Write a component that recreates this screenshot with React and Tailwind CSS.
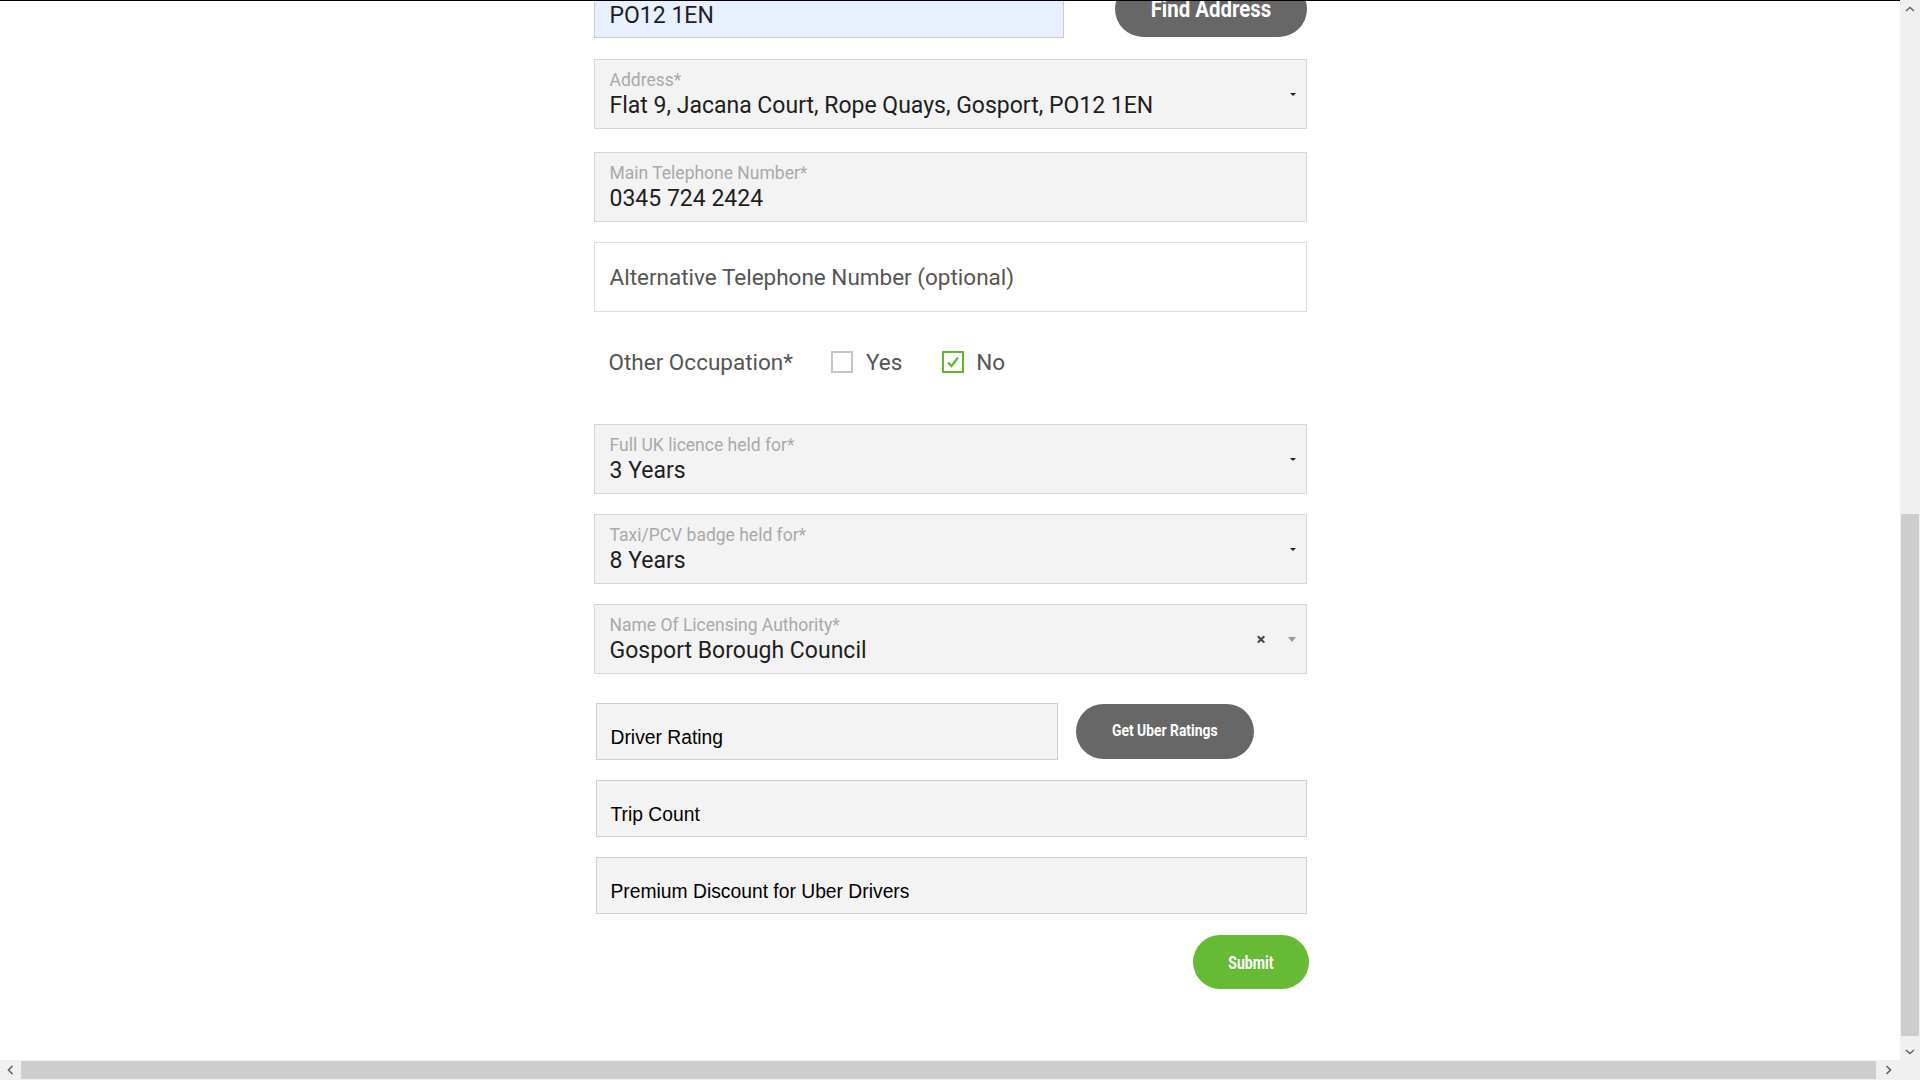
import React from "react";

function Caret({ gray }) {
  if (gray) {
    return (
      <span className="w-0 h-0 border-l-[4px] border-r-[4px] border-t-[5px] border-l-transparent border-r-transparent border-t-[#9a9a9a]" />
    );
  }
  return (
    <span className="w-0 h-0 border-l-[3px] border-r-[3px] border-t-[3px] border-l-transparent border-r-transparent border-t-[#222]" />
  );
}

function SelectField({ label, value, clear, grayCaret, className = "" }) {
  return (
    <div className={"relative h-[70px] border border-[#d6d6d6] bg-[#f3f3f3] pl-[15px] pt-[10px] " + className}>
      <div className="text-[17.5px] leading-[20px] text-[#a9a9a9]">{label}</div>
      <div className="mt-[2px] text-[23px] leading-[27px] text-[#1e1e1e]">{value}</div>
      <div className="absolute right-[10px] top-0 bottom-0 flex items-center gap-[22px]">
        {clear && <span className="text-[17px] font-bold text-[#444] leading-none">×</span>}
        <Caret gray={grayCaret} />
      </div>
    </div>
  );
}

function Check({ checked }) {
  return (
    <span
      className={
        "w-[22px] h-[22px] flex items-center justify-center bg-white border-2 " +
        (checked ? "border-[#5cb82e]" : "border-[#c4c4c4]")
      }
    >
      {checked && (
        <svg width="16" height="16" viewBox="0 0 16 16">
          <path d="M3 8.5 L6.5 12 L13 3.5" fill="none" stroke="#5cb82e" strokeWidth="2.2" />
        </svg>
      )}
    </span>
  );
}

function PlainBox({ text, className = "" }) {
  return (
    <div
      className={
        "h-[57px] border border-[#cfcfcf] bg-[#f3f3f3] pl-[14px] pb-[10px] flex items-end font-['Liberation_Sans',Arial,sans-serif] text-[19.3px] leading-[22px] text-black " +
        className
      }
    >
      {text}
    </div>
  );
}

function BtnText({ children, size }) {
  return (
    <span
      className={
        "inline-block whitespace-nowrap font-['Roboto',sans-serif] font-bold text-white " + size
      }
    >
      {children}
    </span>
  );
}

export default function App() {
  return (
    <div className="w-[1920px] h-[1080px] overflow-hidden flex flex-col bg-white font-['Roboto',sans-serif]">
      <div className="flex-1 flex min-h-0">
        <div className="flex-1 border-t border-black overflow-hidden">
          <div className="w-[713px] mx-auto mt-[-20px] flex flex-col">
            {/* postcode row */}
            <div className="flex items-start">
              <div className="mt-[1px] w-[470px] h-[56px] bg-[#e8f0fe] border border-[#c9ccd3] pl-[15px] pb-[8px] flex items-end text-[23px] leading-[27px] text-[#1e1e1e]">
                PO12 1EN
              </div>
              <div className="ml-auto w-[192px] h-[56px] rounded-full bg-[#676767] flex items-center justify-center">
                <BtnText size="text-[24px] scale-x-[0.85]">Find Address</BtnText>
              </div>
            </div>

            <SelectField
              className="mt-[21px]"
              label="Address*"
              value="Flat 9, Jacana Court, Rope Quays, Gosport, PO12 1EN"
            />

            <div className="mt-[23px] h-[70px] border border-[#d6d6d6] bg-[#f3f3f3] pl-[15px] pt-[10px]">
              <div className="text-[17.5px] leading-[20px] text-[#a9a9a9]">Main Telephone Number*</div>
              <div className="mt-[2px] text-[23px] leading-[27px] text-[#1e1e1e]">0345 724 2424</div>
            </div>

            <div className="mt-[20px] h-[70px] border border-[#dcdcdc] bg-white pl-[15px] flex items-center text-[22.5px] leading-[26px] text-[#555]">
              Alternative Telephone Number (optional)
            </div>

            <div className="mt-[36px] h-[28px] flex items-center pl-[15px] text-[22.5px] leading-[26px] text-[#555]">
              <span>Other Occupation*</span>
              <span className="ml-[38px]"><Check /></span>
              <span className="ml-[13px]">Yes</span>
              <span className="ml-[40px]"><Check checked /></span>
              <span className="ml-[12px]">No</span>
            </div>

            <SelectField className="mt-[48px]" label="Full UK licence held for*" value="3 Years" />
            <SelectField className="mt-[20px]" label="Taxi/PCV badge held for*" value="8 Years" />
            <SelectField
              className="mt-[20px]"
              label="Name Of Licensing Authority*"
              value="Gosport Borough Council"
              clear
              grayCaret
            />

            <div className="mt-[29px] flex items-center">
              <PlainBox className="ml-[2px] w-[462px]" text="Driver Rating" />
              <div className="ml-[18px] w-[178px] h-[55px] rounded-full bg-[#676767] flex items-center justify-center">
                <BtnText size="text-[16.5px] scale-x-[0.84]">Get Uber Ratings</BtnText>
              </div>
            </div>

            <PlainBox className="mt-[20px] ml-[2px]" text="Trip Count" />
            <PlainBox className="mt-[20px] ml-[2px]" text="Premium Discount for Uber Drivers" />

            <div className="mt-[21px] flex justify-end mr-[-2px]">
              <div className="w-[116px] h-[54px] rounded-full bg-[#67bb34] flex items-center justify-center">
                <BtnText size="text-[18px] scale-x-[0.78]">Submit</BtnText>
              </div>
            </div>
          </div>
        </div>

        {/* vertical scrollbar */}
        <div className="w-[20px] bg-[#f0f0f0] flex flex-col">
          <div className="h-[17px] flex items-center justify-center">
            <svg width="10" height="6" viewBox="0 0 10 6">
              <path d="M1 5 L5 1.5 L9 5" fill="none" stroke="#606060" strokeWidth="1.4" />
            </svg>
          </div>
          <div className="flex-1 flex flex-col px-[1px]">
            <div className="h-[497px]" />
            <div className="h-[522px] bg-[#cdcdcd]" />
          </div>
          <div className="h-[17px] flex items-center justify-center">
            <svg width="10" height="6" viewBox="0 0 10 6">
              <path d="M1 1 L5 4.5 L9 1" fill="none" stroke="#606060" strokeWidth="1.4" />
            </svg>
          </div>
        </div>
      </div>

      {/* horizontal scrollbar */}
      <div className="h-[20px] flex bg-[#f0f0f0]">
        <div className="w-[21px] flex items-center justify-center">
          <svg width="7" height="10" viewBox="0 0 7 10">
            <path d="M5.5 1 L1.5 5 L5.5 9" fill="none" stroke="#606060" strokeWidth="1.6" />
          </svg>
        </div>
        <div className="flex-1 py-[1px]">
          <div className="h-full bg-[#cdcdcd]" />
        </div>
        <div className="w-[24px] flex items-center justify-center">
          <svg width="7" height="10" viewBox="0 0 7 10">
            <path d="M1.5 1 L5.5 5 L1.5 9" fill="none" stroke="#606060" strokeWidth="1.6" />
          </svg>
        </div>
        <div className="w-[20px]" />
      </div>
    </div>
  );
}
